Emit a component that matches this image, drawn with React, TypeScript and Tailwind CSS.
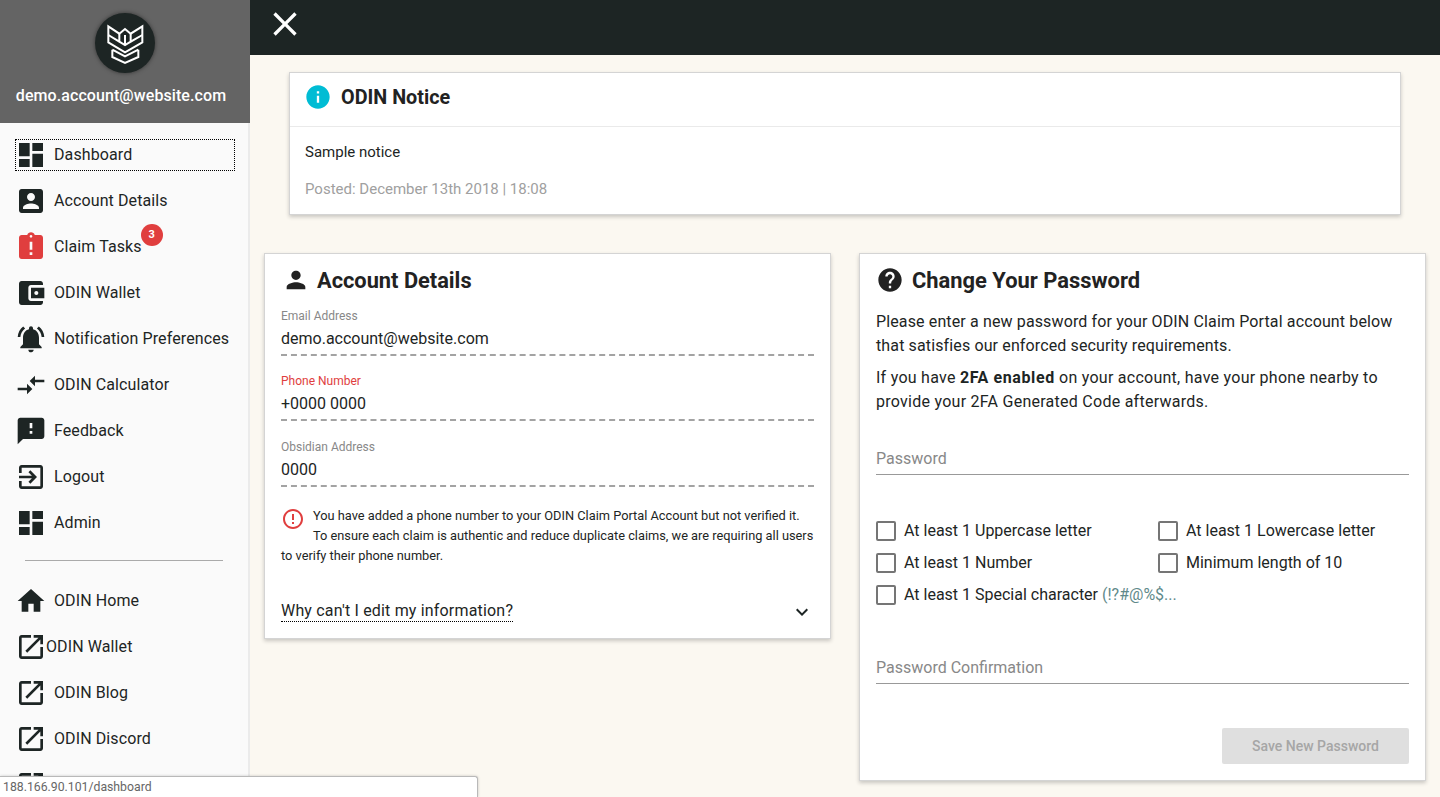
const paths = {
  dashboard: 'M3 13h8V3H3v10zm0 8h8v-6H3v6zm10 0h8V11h-8v10zm0-18v6h8V3h-8z',
  account: 'M3 5v14c0 1.1.89 2 2 2h14c1.1 0 2-.9 2-2V5c0-1.1-.9-2-2-2H5c-1.11 0-2 .9-2 2zm12 4c0 1.66-1.34 3-3 3s-3-1.34-3-3 1.34-3 3-3 3 1.34 3 3zm-9 8c0-2 4-3.1 6-3.1s6 1.1 6 3.1v1H6v-1z',
  late: 'M19 3h-4.18C14.4 1.84 13.3 1 12 1c-1.3 0-2.4.84-2.82 2H5c-1.1 0-2 .9-2 2v14c0 1.1.9 2 2 2h14c1.1 0 2-.9 2-2V5c0-1.1-.9-2-2-2zm-6 15h-2v-2h2v2zm0-4h-2V8h2v6zm-1-9c-.55 0-1-.45-1-1s.45-1 1-1 1 .45 1 1-.45 1-1 1z',
  wallet: 'M21 18v1c0 1.1-.9 2-2 2H5c-1.11 0-2-.9-2-2V5c0-1.1.89-2 2-2h14c1.1 0 2 .9 2 2v1h-9c-1.11 0-2 .9-2 2v8c0 1.1.89 2 2 2h9zm-9-2h10V8H12v8zm4-2.5c-.83 0-1.5-.67-1.5-1.5s.67-1.5 1.5-1.5 1.5.67 1.5 1.5-.67 1.5-1.5 1.5z',
  bell: 'M7.58 4.08L6.15 2.65C3.75 4.48 2.17 7.3 2.03 10.5h2c.15-2.65 1.51-4.97 3.55-6.42zm12.39 6.42h2c-.15-3.2-1.73-6.02-4.12-7.85l-1.42 1.43c2.02 1.45 3.39 3.77 3.54 6.42zM18 11c0-3.07-1.64-5.64-4.5-6.32V4c0-.83-.67-1.5-1.5-1.5s-1.5.67-1.5 1.5v.68C7.63 5.36 6 7.92 6 11v5l-2 2v1h16v-1l-2-2v-5zm-6 11c.14 0 .27-.01.4-.04.65-.14 1.18-.58 1.44-1.18.1-.24.15-.5.15-.78h-4c.01 1.1.9 2 2.01 2z',
  compare: 'M9.01 14H2v2h7.01v3L13 15l-3.99-4v3zm5.98-1v-3H22V8h-7.01V5L11 9l3.99 4z',
  feedback: 'M20 2H4c-1.1 0-1.99.9-1.99 2L2 22l4-4h14c1.1 0 2-.9 2-2V4c0-1.1-.9-2-2-2zm-7 12h-2v-2h2v2zm0-4h-2V6h2v4z',
  exit: 'M10.09 15.59L11.5 17l5-5-5-5-1.41 1.41L12.67 11H3v2h9.67l-2.58 2.59zM19 3H5c-1.11 0-2 .9-2 2v4h2V5h14v14H5v-4H3v4c0 1.1.89 2 2 2h14c1.1 0 2-.9 2-2V5c0-1.1-.9-2-2-2z',
  home: 'M10 20v-6h4v6h5v-8h3L12 3 2 12h3v8z',
  open: 'M19 19H5V5h7V3H5c-1.11 0-2 .9-2 2v14c0 1.1.89 2 2 2h14c1.1 0 2-.9 2-2v-7h-2v7zM14 3v2h3.59l-9.83 9.83 1.41 1.41L19 6.41V10h2V3h-7z',
  person: 'M12 12c2.21 0 4-1.79 4-4s-1.79-4-4-4-4 1.79-4 4 1.79 4 4 4zm0 2c-2.67 0-8 1.34-8 4v2h16v-2c0-2.66-5.33-4-8-4z',
  help: 'M12 2C6.48 2 2 6.48 2 12s4.48 10 10 10 10-4.48 10-10S17.52 2 12 2zm1 17h-2v-2h2v2zm2.07-7.75l-.9.92C13.45 12.9 13 13.5 13 15h-2v-.5c0-1.1.45-2.1 1.17-2.83l1.24-1.26c.37-.36.59-.86.59-1.41 0-1.1-.9-2-2-2s-2 .9-2 2H8c0-2.21 1.79-4 4-4s4 1.79 4 4c0 .88-.36 1.68-.93 2.25z',
  info: 'M12 2C6.48 2 2 6.48 2 12s4.48 10 10 10 10-4.48 10-10S17.52 2 12 2zm1 15h-2v-6h2v6zm0-8h-2V7h2v2z',
  error: 'M11 15h2v2h-2zm0-8h2v6h-2zm.99-5C6.47 2 2 6.48 2 12s4.47 10 9.99 10C17.52 22 22 17.52 22 12S17.52 2 11.99 2zM12 20c-4.42 0-8-3.58-8-8s3.58-8 8-8 8 3.58 8 8-3.58 8-8 8z',
  close: 'M19 6.41L17.59 5 12 10.59 6.41 5 5 6.41 10.59 12 5 17.59 6.41 19 12 13.41 17.59 19 19 17.59 13.41 12z',
  chevron: 'M16.59 8.59L12 13.17 7.41 8.59 6 10l6 6 6-6z',
};

const Icon = ({ d, className }: { d: string; className: string }) => (
  <svg viewBox="0 0 24 24" fill="currentColor" className={className}>
    <path d={d} />
  </svg>
);

const Logo = () => (
  <svg viewBox="285 40 180 180" fill="none" stroke="white" strokeWidth="6" className="w-[60px] h-[60px]">
    <path d="M325 80V128L375 158L427 128V80L392 102L375 88L358 102Z" />
    <path d="M325 106L358 126V102M427 106L392 126V102M358 126L375 136L392 126M375 106V134" />
    <path d="M337 150V172L375 190L415 172V150M337 150L375 170L415 150" />
  </svg>
);

const mainLinks = [
  { label: 'Account Details', icon: paths.account },
  { label: 'Claim Tasks', icon: paths.late, red: true, badge: 3 },
  { label: 'ODIN Wallet', icon: paths.wallet },
  { label: 'Notification Preferences', icon: paths.bell },
  { label: 'ODIN Calculator', icon: paths.compare },
  { label: 'Feedback', icon: paths.feedback },
  { label: 'Logout', icon: paths.exit },
  { label: 'Admin', icon: paths.dashboard },
];

const NavRow = ({ label, icon, red, badge, tight, focused }: {
  label?: string; icon: string; red?: boolean; badge?: number; tight?: boolean; focused?: boolean;
}) => (
  <a className={`flex items-center h-[32px] shrink-0 ml-[15px] mr-[13px] ${focused ? 'outline-1 outline-dotted outline-black -outline-offset-1' : ''}`}>
    <Icon d={icon} className={`w-[32px] h-[32px] shrink-0 ${red ? 'text-[#e03e3e]' : 'text-[#1d2524]'}`} />
    <span className={`relative text-[16px] tracking-[0.1px] whitespace-nowrap text-[#1d2524] ${tight ? 'ml-[-1px]' : 'ml-[7px]'}`}>
      {label}
      {badge && (
        <span className="absolute right-[-21px] top-[-11px] w-[22px] h-[22px] rounded-full bg-[#e03e3e] text-white text-[11px] font-bold flex items-center justify-center">
          {badge}
        </span>
      )}
    </span>
  </a>
);

const Field = ({ label, value, error }: { label: string; value: string; error?: boolean }) => (
  <div className="h-[65.3px] flex flex-col">
    <label className={`text-[12px] leading-[16px] mt-[3px] ${error ? 'text-[#e03e3e]' : 'text-[#888888]'}`}>{label}</label>
    <div className="text-[16px] leading-[24px] mt-[3px] pb-[3px] border-b-2 border-dashed border-[#a3a3a3] text-[#1d2524]">{value}</div>
  </div>
);

const Check = ({ children }: { children: React.ReactNode }) => (
  <label className="flex items-center h-[32px] text-[16px] whitespace-nowrap text-[#1d2524]">
    <span className="w-[20px] h-[20px] mr-[8px] shrink-0 border-2 border-[#757575] rounded-[2px]" />
    {children}
  </label>
);

const PasswordInput = ({ label }: { label: string }) => (
  <div className="h-[29px] border-b border-[#999999] text-[16px] leading-[24px] text-[#888888] pt-[1px]">{label}</div>
);

export default function App() {
  return (
    <div className="relative h-[797px] overflow-hidden flex bg-[#fbf8f1] font-[Roboto,sans-serif] text-[#1d2524]">
      {/* Sidebar */}
      <aside className="w-[250px] shrink-0 h-full overflow-hidden bg-[#fafafa] flex flex-col">
        <div className="h-[123px] shrink-0 bg-[#646464] flex flex-col items-center pt-[13px]">
          <div className="w-[60px] h-[60px] rounded-full bg-[#1d2524] shadow-[0_0_4px_rgba(0,0,0,0.5)] flex items-center justify-center">
            <Logo />
          </div>
          <div className="mt-[11px] pr-[8px] text-[16px] tracking-[0.08px] leading-[24px] font-medium text-white">demo.account@website.com</div>
        </div>
        <nav className="flex-1 flex flex-col gap-[14px] pt-[16px] border-r-2 border-[#ebebeb]">
          <NavRow label="Dashboard" icon={paths.dashboard} focused />
          {mainLinks.map((link) => (
            <NavRow key={link.label} {...link} />
          ))}
          <hr className="mx-[25px] mt-[7px] mb-[10px] border-t border-[#aaaaaa]" />
          <NavRow label="ODIN Home" icon={paths.home} />
          <NavRow label="ODIN Wallet" icon={paths.open} tight />
          <NavRow label="ODIN Blog" icon={paths.open} />
          <NavRow label="ODIN Discord" icon={paths.open} />
          <NavRow icon={paths.open} />
        </nav>
      </aside>

      {/* Main */}
      <main className="flex-1 min-w-0 flex flex-col">
        <header className="h-[55px] shrink-0 bg-[#1d2524] pl-[15px] pt-[4px]">
          <Icon d={paths.close} className="w-[40px] h-[40px] text-white" />
        </header>

        <section className="mx-[39px] mt-[17px] h-[143px] bg-white border border-[#d4d4d4] shadow-[0_2px_4px_rgba(0,0,0,0.2)]">
          <div className="h-[54px] flex items-center pl-[14px] pb-[6px] border-b border-[#eaeaea]">
            <Icon d={paths.info} className="w-[28px] h-[28px] text-[#00bcd4]" />
            <h2 className="ml-[9px] mt-[2px] text-[19.8px] font-bold text-[#222222]">ODIN Notice</h2>
          </div>
          <p className="ml-[15px] mt-[14px] text-[15px] leading-[22px] text-[#1d2524]">Sample notice</p>
          <p className="ml-[15px] mt-[15px] text-[15px] leading-[22px] text-[#a0a0a0]">Posted: December 13th 2018 | 18:08</p>
        </section>

        <div className="flex items-start gap-[28px] px-[14px] mt-[38px]">
          {/* Account details */}
          <section className="flex-1 min-w-0 h-[386px] bg-white border border-[#d4d4d4] shadow-[0_2px_4px_rgba(0,0,0,0.2)] px-[16px]">
            <div className="h-[51px] flex items-center">
              <Icon d={paths.person} className="w-[28px] h-[28px] ml-[1px] text-[#222222]" />
              <h2 className="ml-[7px] mt-[3px] text-[21.8px] font-bold text-[#222222]">Account Details</h2>
            </div>
            <Field label="Email Address" value="demo.account@website.com" />
            <Field label="Phone Number" value="+0000 0000" error />
            <Field label="Obsidian Address" value="0000" />
            <div className="mt-[5px] text-[12.8px] leading-[20px] text-[#1d2524]">
              <Icon d={paths.error} className="float-left w-[24px] h-[24px] mr-[8px] mt-[1px] text-[#e03e3e]" />
              You have added a phone number to your ODIN Claim Portal Account but not verified it. To ensure each claim is authentic and reduce duplicate claims, we are requiring all users to verify their phone number.
            </div>
            <div className="mt-[34px] flex items-center justify-between">
              <span className="text-[16px] tracking-[0.18px] leading-[20px] border-b border-dotted border-black text-[#1d2524]">Why can't I edit my information?</span>
              <Icon d={paths.chevron} className="w-[24px] h-[24px] text-[#1d2524]" />
            </div>
          </section>

          {/* Change password */}
          <section className="flex-1 min-w-0 h-[528px] bg-white border border-[#d4d4d4] shadow-[0_2px_4px_rgba(0,0,0,0.2)] px-[16px]">
            <div className="h-[52px] flex items-center">
              <Icon d={paths.help} className="w-[28px] h-[28px] text-[#222222]" />
              <h2 className="ml-[8px] mt-[2px] text-[21.9px] font-bold text-[#222222]">Change Your Password</h2>
            </div>
            <p className="mt-[4px] text-[16px] tracking-[0.13px] leading-[24px]">Please enter a new password for your ODIN Claim Portal account below that satisfies our enforced security requirements.</p>
            <p className="mt-[8px] text-[16px] tracking-[0.26px] leading-[24px]">If you have <b className="font-bold tracking-[0.6px]">2FA enabled</b> on your account, have your phone nearby to provide your 2FA Generated Code afterwards.</p>
            <div className="mt-[32px]">
              <PasswordInput label="Password" />
            </div>
            <div className="mt-[40px] grid grid-cols-[282px_1fr]">
              <Check>At least 1 Uppercase letter</Check>
              <Check>At least 1 Lowercase letter</Check>
              <Check>At least 1 Number</Check>
              <Check>Minimum length of 10</Check>
              <Check>At least 1 Special character&nbsp;<span className="text-[#5f8a8b]">(!?#@%$...</span></Check>
            </div>
            <div className="mt-[44px]">
              <PasswordInput label="Password Confirmation" />
            </div>
            <div className="mt-[44px] flex justify-end">
              <button className="w-[187px] h-[36px] rounded-[2px] bg-[#dfdfdf] text-[14px] font-medium text-[#a6a6a6]">Save New Password</button>
            </div>
          </section>
        </div>
      </main>

      {/* Link preview bar */}
      <div className="absolute left-0 bottom-0 w-[478px] h-[21px] bg-white border-t border-r border-[#b9b9b9] rounded-tr-[3px] shadow-[0_0_3px_rgba(0,0,0,0.2)] pl-[3px] text-[12.25px] leading-[20px] text-[#666666]">
        188.166.90.101/dashboard
      </div>
    </div>
  );
}
